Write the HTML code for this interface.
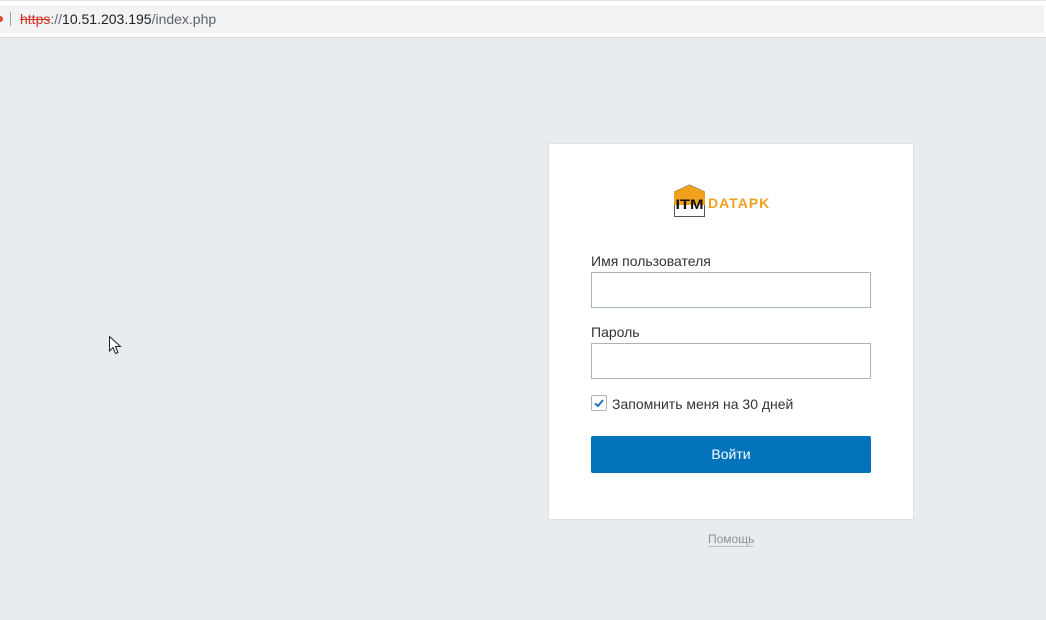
<!DOCTYPE html>
<html><head><meta charset="utf-8"><style>
*{margin:0;padding:0;box-sizing:border-box}
html,body{width:1046px;height:620px;overflow:hidden;background:#e9ecef;font-family:"Liberation Sans",Arial,sans-serif;position:relative}
.a{position:absolute}
</style></head><body>
<div class="a" style="left:0;top:0;width:1046px;height:38px;background:#fff;border-top:1px solid #e4e4e4;border-bottom:1px solid #d6d9dc"></div>
<div class="a" style="left:0;top:5px;width:1044px;height:28px;background:#f1f3f4"></div>
<div class="a" style="left:-3px;top:16px;width:6px;height:6px;border-radius:3px;background:#e0452f"></div>
<div class="a" style="left:10px;top:12px;width:1px;height:14px;background:#9aa0a6"></div>
<div class="a" style="left:20px;top:11px;font-size:14px;color:#5f6368;white-space:nowrap"><span style="color:#d93025;text-decoration:line-through">https</span>://<span style="color:#202124">10.51.203.195</span>/index.php</div>
<svg class="a" style="left:108px;top:335px" width="16" height="22" viewBox="0 0 16 22"><path d="M1.5 1.5 L1.5 16 L5 12.5 L7.5 18.5 L10 17.5 L7.5 11.5 L12.5 11.5 Z" fill="#fff" stroke="#222" stroke-width="1"/></svg>
<div class="a" style="left:548px;top:143px;width:366px;height:377px;background:#fff;border:1px solid #dde1e4"></div>
<svg class="a" style="left:673px;top:184px" width="33" height="34" viewBox="0 0 33 34">
<path d="M1.5 8 L16.5 1 L31.5 8 L31.5 32.5 L1.5 32.5 Z" fill="#fff" stroke="#555" stroke-width="1"/>
<path d="M1 8 L16.5 1 L32 8 L32 21 L1 21 Z" fill="#f0a21f"/>
<text x="16.5" y="25" font-family="Liberation Sans" font-weight="bold" font-size="14" text-anchor="middle" fill="#111" textLength="28" lengthAdjust="spacingAndGlyphs">ITM</text>
</svg>
<div class="a" style="left:708px;top:195px;font-size:14px;font-weight:bold;color:#f0a21f;letter-spacing:1px">DATAPK</div>
<div class="a" style="left:591px;top:253px;font-size:14px;color:#333">Имя пользователя</div>
<div class="a" style="left:591px;top:272px;width:280px;height:36px;border:1px solid #a9b5bd;background:#fff"></div>
<div class="a" style="left:591px;top:324px;font-size:14px;color:#333">Пароль</div>
<div class="a" style="left:591px;top:343px;width:280px;height:36px;border:1px solid #a9b5bd;background:#fff"></div>
<div class="a" style="left:591px;top:395px;width:16px;height:16px;border:1px solid #a9b5bd;border-radius:2px;background:#fff"></div>
<svg class="a" style="left:593px;top:397px" width="12" height="12" viewBox="0 0 12 12"><path d="M2 6.5 L5 9 L10 3" fill="none" stroke="#1a73c0" stroke-width="2"/></svg>
<div class="a" style="left:612px;top:396px;font-size:14px;color:#333">Запомнить меня на 30 дней</div>
<div class="a" style="left:591px;top:436px;width:280px;height:37px;background:#0073ba;border-radius:2px;color:#fff;font-size:14px;line-height:37px;text-align:center">Войти</div>
<div class="a" style="left:708px;top:532px;font-size:12px;color:#8a9299;border-bottom:1px solid #b9bfc4;line-height:14px">Помощь</div>
</body></html>
